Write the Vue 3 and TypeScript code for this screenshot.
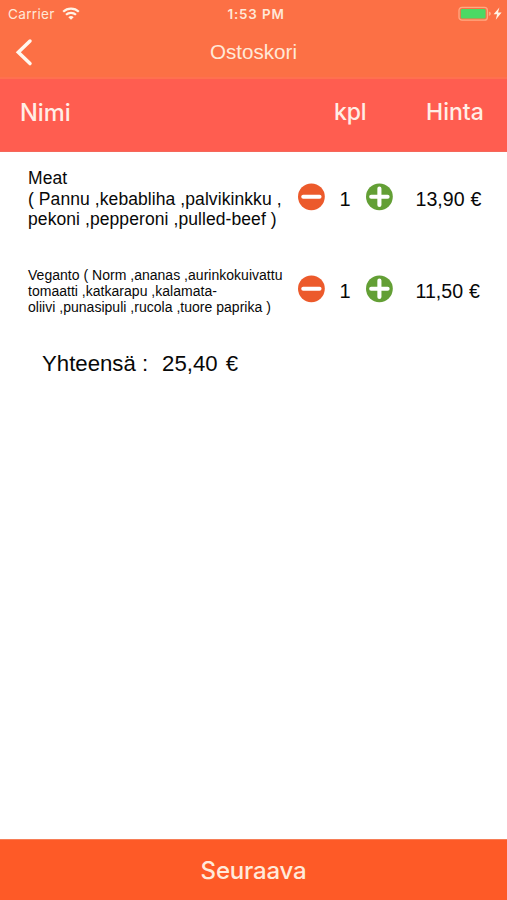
<script setup lang="ts">
import { ref, computed } from 'vue'

interface CartItem {
  id: number
  lines: string[]
  quantity: number
  price: number
  compact: boolean
}

const items = ref<CartItem[]>([
  {
    id: 1,
    lines: ['Meat', '( Pannu ,kebabliha ,palvikinkku ,', 'pekoni ,pepperoni ,pulled-beef )'],
    quantity: 1,
    price: 13.9,
    compact: false,
  },
  {
    id: 2,
    lines: ['Veganto ( Norm ,ananas ,aurinkokuivattu', 'tomaatti ,katkarapu ,kalamata-', 'oliivi ,punasipuli ,rucola ,tuore paprika )'],
    quantity: 1,
    price: 11.5,
    compact: true,
  },
])

const format = (value: number): string => value.toFixed(2).replace('.', ',')
const total = computed(() => items.value.reduce((sum, item) => sum + item.price * item.quantity, 0))

function change(item: CartItem, step: number): void {
  item.quantity = Math.max(0, item.quantity + step)
}
</script>

<template>
  <div class="screen">
    <header class="top">
      <div class="status">
        <div class="network">
          <span class="carrier">Carrier</span>
          <svg class="wifi" width="18" height="14" viewBox="0 0 18 14">
            <path d="M1.2 4.7a11.2 11.2 0 0 1 15.6 0M4 7.8a7.2 7.2 0 0 1 10 0" fill="none" stroke="#fff3e6" stroke-width="2.2" />
            <path d="M6.3 10.2a3.9 3.9 0 0 1 5.4 0L9 12.8z" fill="#fff3e6" />
          </svg>
        </div>
        <span class="time">1:53 PM</span>
        <svg class="battery" width="46" height="16" viewBox="0 0 46 16">
          <rect x="1" y="1.4" width="28.4" height="12.8" rx="3" fill="none" stroke="#ffa982" stroke-width="1.3" />
          <rect x="2.8" y="3.1" width="24.8" height="9.4" rx="1.3" fill="#4cd964" />
          <path d="M30.8 5.6q2.2 .6 2.2 2.2t-2.2 2.2z" fill="#ffa982" />
          <path d="M41.4 1.6L35.6 8.3h3.5l-1.3 5.5 5.8-7.2H40z" fill="#fff3e6" />
        </svg>
      </div>
      <div class="nav">
        <button class="back" aria-label="Takaisin">
          <svg width="20" height="30" viewBox="0 0 20 30">
            <path d="M16 4L4.3 15.2 16 26.6" fill="none" stroke="#fff8ef" stroke-width="3.5" stroke-linecap="round" />
          </svg>
        </button>
        <h1 class="title">Ostoskori</h1>
      </div>
    </header>

    <div class="columns">
      <span class="col-name">Nimi</span>
      <span class="col-count">kpl</span>
      <span class="col-price">Hinta</span>
    </div>

    <main class="cart">
      <div v-for="item in items" :key="item.id" class="row">
        <div class="name" :class="{ compact: item.compact }">
          <div v-for="line in item.lines" :key="line">{{ line }}</div>
        </div>
        <button class="step" aria-label="-" @click="change(item, -1)">
          <svg width="28" height="28" viewBox="0 0 28 28">
            <circle cx="14.4" cy="13.8" r="13.4" fill="#ec5a2b" />
            <path d="M6.2 13.8h16.4" stroke="#fff" stroke-width="3.9" stroke-linecap="round" />
          </svg>
        </button>
        <span class="quantity">{{ item.quantity }}</span>
        <button class="step" aria-label="+" @click="change(item, 1)">
          <svg width="28" height="28" viewBox="0 0 28 28">
            <circle cx="14.4" cy="13.8" r="13.4" fill="#639f35" />
            <path d="M6.2 13.8h16.4M14.4 5.6V22" stroke="#fff" stroke-width="4.1" stroke-linecap="round" />
          </svg>
        </button>
        <span class="price"><span>{{ format(item.price) }}</span><span>€</span></span>
      </div>
      <div class="total">
        <span>Yhteensä :</span>
        <span class="sum"><span>{{ format(total) }}</span><span>€</span></span>
      </div>
    </main>

    <button class="next">Seuraava</button>
  </div>
</template>

<style>
body {
  margin: 0;
}
</style>

<style scoped>
.screen {
  display: flex;
  flex-direction: column;
  width: 507px;
  height: 900px;
  overflow: hidden;
  background: #fff;
  color: #080808;
  font-family: 'Liberation Sans', Arial, sans-serif;
}
button {
  padding: 0;
  border: 0;
  background: none;
  color: inherit;
  font: inherit;
}
svg {
  display: block;
}
.top {
  box-sizing: border-box;
  height: 79px;
  background: #fc7045;
  border-bottom: 2px solid #ff7050;
  color: #ffe8d8;
}
.status {
  display: grid;
  grid-template-columns: 1fr auto 1fr;
  align-items: center;
  height: 27px;
  padding: 0 3px 0 8px;
  font-family: Inter, sans-serif;
  font-size: 13px;
}
.network {
  display: flex;
  align-items: center;
  gap: 7px;
}
.carrier {
  font-size: 13.6px;
  letter-spacing: 0.3px;
}
.time {
  font-weight: 600;
  font-size: 13.4px;
  letter-spacing: 0.85px;
}
.battery {
  justify-self: end;
}
.nav {
  display: grid;
  grid-template-columns: 100px 1fr 100px;
  align-items: center;
  height: 50px;
}
.back {
  justify-self: start;
  margin-left: 14px;
}
.title {
  margin: 0;
  text-align: center;
  font-size: 20.6px;
  font-weight: 400;
  line-height: 24px;
}
.columns {
  display: grid;
  grid-template-columns: 314px 92px 1fr;
  align-items: center;
  box-sizing: border-box;
  height: 73px;
  padding: 0 0 6px 20px;
  background: #ff5d50;
  border-bottom: 1px solid #f4685b;
  color: #ffeee6;
  font-family: Inter, sans-serif;
  font-size: 23px;
  font-weight: 500;
}
.col-name {
  font-size: 23.6px;
}
.col-count {
  letter-spacing: -0.2px;
}
.cart {
  flex: 1;
  padding-top: 1px;
}
.row {
  display: grid;
  grid-template-columns: 269px 28px 40px 28px 1fr;
  align-items: center;
  height: 92px;
  padding-left: 28px;
}
.name {
  font-size: 17.5px;
  line-height: 20.5px;
  letter-spacing: 0.08px;
  white-space: nowrap;
}
.name.compact {
  font-size: 14px;
  line-height: 16.3px;
  letter-spacing: 0.02px;
}
.step {
  margin-top: -4px;
}
.quantity {
  text-align: center;
  font-size: 20px;
}
.price {
  display: flex;
  gap: 6px;
  padding-left: 22.5px;
  font-size: 19.6px;
}
.total {
  display: flex;
  gap: 14px;
  padding: 14px 0 0 42px;
  font-size: 22.2px;
  line-height: 26px;
}
.sum {
  display: flex;
  gap: 8px;
}
.next {
  box-sizing: border-box;
  height: 61px;
  border-top: 1px solid #f77e57;
  background: #fe5a27;
  color: #ffeadb;
  font-family: Inter, sans-serif;
  font-size: 24px;
  font-weight: 500;
  letter-spacing: -0.2px;
}
</style>
